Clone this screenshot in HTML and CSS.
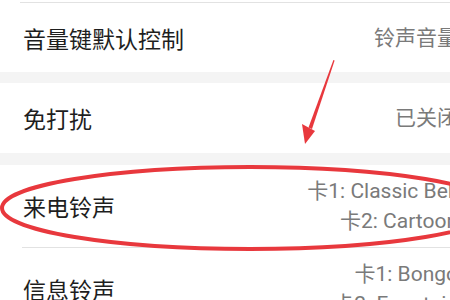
FILE: index.html
```html
<!DOCTYPE html>
<html lang="zh-CN">
<head>
<meta charset="utf-8">
<title>声音设置</title>
<link rel="stylesheet" href="styles.css">
</head>
<body>
<div class="screen">
  <div class="list">
    <div class="top-line"></div>
    <div class="row">
      <div class="label">音量键默认控制</div>
      <div class="value"><span>铃声音量</span></div>
    </div>
    <div class="band"></div>
    <div class="row row-mid">
      <div class="label">免打扰</div>
      <div class="value"><span>已关闭</span></div>
    </div>
    <div class="band band-b"></div>
    <div class="row tall divided">
      <div class="label">来电铃声</div>
      <div class="value"><span>卡1: Classic Bell</span><span>卡2: Cartoon</span></div>
    </div>
    <div class="row tall">
      <div class="label">信息铃声</div>
      <div class="value"><span>卡1: Bongo</span><span>卡2: Fountain</span></div>
    </div>
  </div>
  <svg class="marks" width="450" height="300" viewBox="0 0 450 300">
    <ellipse cx="250" cy="208" rx="248" ry="41" fill="none" stroke="#e8383d" stroke-width="4"/>
    <polygon points="333.4,60 334.6,60.5 312,129 308.5,127.5" fill="#e8383d"/>
    <polygon points="302,124 315,131 305,144" fill="#e8383d"/>
  </svg>
</div>
</body>
</html>
```
FILE: styles.css
```css
html, body {
  margin: 0;
  padding: 0;
  background: #ffffff;
}
body {
  width: 450px;
  height: 300px;
  overflow: hidden;
  font-family: Roboto, "Noto Sans CJK SC", "Noto Sans", sans-serif;
}
.screen {
  position: relative;
  width: 450px;
  height: 300px;
  overflow: hidden;
}
.list {
  width: 480px;
  display: flex;
  flex-direction: column;
}
.top-line {
  height: 2px;
  margin-left: 20px;
  border-bottom: 1px solid #e2e2e2;
}
.row {
  height: 69px;
  display: flex;
  align-items: center;
  justify-content: space-between;
  padding: 0 22px 0 23px;
  flex-shrink: 0;
}
.row.row-mid {
  height: 70px;
}
.row.tall {
  height: 82px;
}
.row.divided {
  position: relative;
}
.row.divided::after {
  content: "";
  position: absolute;
  left: 22px;
  right: 0;
  bottom: -1px;
  border-bottom: 1px solid #e2e2e2;
}
.row.tall + .row.tall {
  margin-top: 1px;
}
.band {
  height: 11px;
  background: #f4f4f4;
  flex-shrink: 0;
}
.band-b {
  height: 12px;
}
.label {
  font-size: 23px;
  color: #1e1e1e;
  white-space: nowrap;
}
.value {
  display: flex;
  flex-direction: column;
  align-items: flex-end;
  font-size: 21px;
  line-height: 30px;
  color: #7a7a7a;
  white-space: nowrap;
}
.marks {
  position: absolute;
  left: 0;
  top: 0;
  pointer-events: none;
}
```
